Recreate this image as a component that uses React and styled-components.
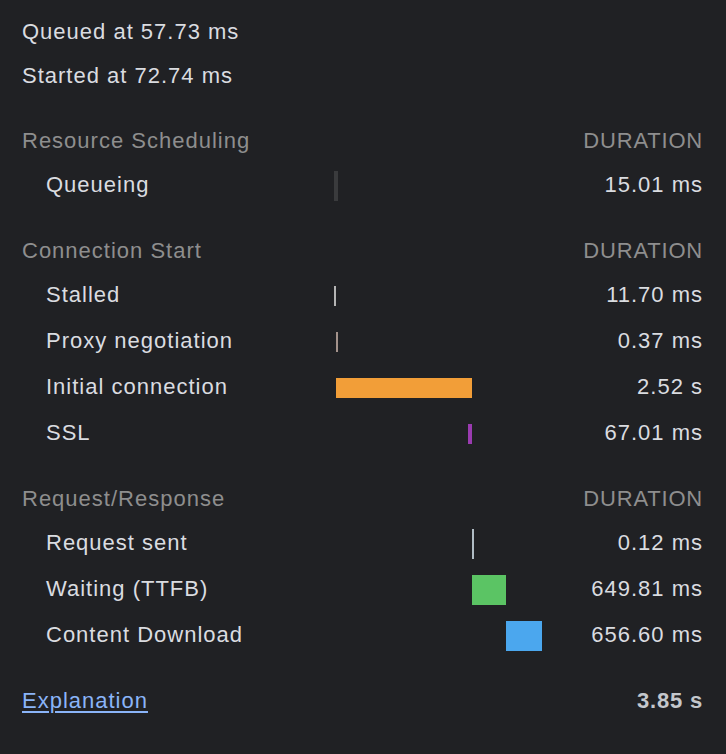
import React from "react";
import styled, { createGlobalStyle } from "styled-components";

const Global = createGlobalStyle`
  html, body {
    margin: 0;
    padding: 0;
    background: #202124;
  }
  body {
    font-family: "Liberation Sans", Arial, sans-serif;
    font-size: 22px;
    letter-spacing: 1px;
    color: #dadce0;
  }
`;

const Panel = styled.div`
  width: 726px;
  min-height: 754px;
  box-sizing: border-box;
  padding: 10px 23px 0 22px;
  background: #202124;
`;

const InfoRow = styled.div`
  height: 44px;
  display: flex;
  align-items: center;
  white-space: nowrap;
`;

const Section = styled.section`
  margin-top: 22px;
  display: flex;
  flex-direction: column;
`;

const HeaderRow = styled.div`
  height: 42px;
  display: flex;
  align-items: center;
  justify-content: space-between;
  color: #8e8e8e;
  white-space: nowrap;
`;

const Caps = styled.span`
  letter-spacing: 0.8px;
`;

const Row = styled.div`
  height: 46px;
  display: grid;
  grid-template-columns: 312px 208px 1fr;
  align-items: center;
  white-space: nowrap;
`;

const Label = styled.div`
  padding-left: 24px;
`;

const Track = styled.div`
  position: relative;
  height: 46px;
  display: flex;
  align-items: center;
  padding-top: 1px;
  box-sizing: border-box;
`;

const Bar = styled.div`
  position: absolute;
  height: ${(p) => (p.$tall ? 30 : 20)}px;
  background: ${(p) => p.$color};
`;

const Value = styled.div`
  text-align: right;
`;

const Footer = styled.div`
  margin-top: 22px;
  height: 42px;
  display: flex;
  align-items: center;
  justify-content: space-between;
`;

const Link = styled.a`
  color: #8ab4f8;
  text-decoration: underline;
  text-underline-offset: 3px;
  cursor: pointer;
`;

const Total = styled.div`
  font-weight: bold;
  letter-spacing: 0.8px;
  color: #c4c7cc;
`;

const SCALE = 208 / 3850;

function Timing({ label, start, dur, color, tall, minW = 2, value }) {
  const left = start * SCALE;
  const width = Math.max(minW, dur * SCALE);
  return (
    <Row>
      <Label>{label}</Label>
      <Track>
        <Bar $color={color} $tall={tall} style={{ left: `${left}px`, width: `${width}px` }} />
      </Track>
      <Value>{value}</Value>
    </Row>
  );
}

export default function App() {
  return (
    <>
      <Global />
      <Panel>
        <InfoRow>Queued at 57.73 ms</InfoRow>
        <InfoRow>Started at 72.74 ms</InfoRow>

        <Section>
          <HeaderRow>
            <span>Resource Scheduling</span>
            <Caps>DURATION</Caps>
          </HeaderRow>
          <Timing label="Queueing" start={0} dur={15.01} minW={4} tall color="#3a3b3d" value="15.01 ms" />
        </Section>

        <Section>
          <HeaderRow>
            <span>Connection Start</span>
            <Caps>DURATION</Caps>
          </HeaderRow>
          <Timing label="Stalled" start={0} dur={11.7} color="#b4b4b4" value="11.70 ms" />
          <Timing label="Proxy negotiation" start={37} dur={0.37} color="#a3928b" value="0.37 ms" />
          <Timing label="Initial connection" start={37} dur={2510} color="#f29e38" value="2.52 s" />
          <Timing label="SSL" start={2473} dur={74} color="#9a3bb0" value="67.01 ms" />
        </Section>

        <Section>
          <HeaderRow>
            <span>Request/Response</span>
            <Caps>DURATION</Caps>
          </HeaderRow>
          <Timing label="Request sent" start={2547} dur={0.12} tall color="#b0bcc4" value="0.12 ms" />
          <Timing label="Waiting (TTFB)" start={2547} dur={630} tall color="#5bc464" value="649.81 ms" />
          <Timing label="Content Download" start={3177} dur={666} tall color="#4ba7ee" value="656.60 ms" />
        </Section>

        <Footer>
          <Link>Explanation</Link>
          <Total>3.85 s</Total>
        </Footer>
      </Panel>
    </>
  );
}
